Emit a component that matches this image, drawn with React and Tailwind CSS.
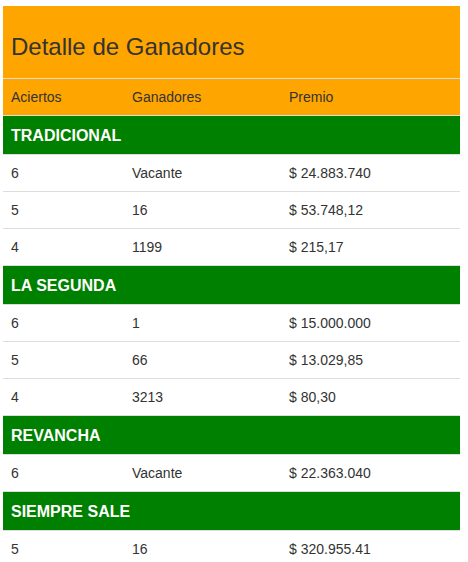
import React from 'react';

const sections = [
  {
    name: 'TRADICIONAL',
    rows: [
      ['6', 'Vacante', '$ 24.883.740'],
      ['5', '16', '$ 53.748,12'],
      ['4', '1199', '$ 215,17'],
    ],
  },
  {
    name: 'LA SEGUNDA',
    rows: [
      ['6', '1', '$ 15.000.000'],
      ['5', '66', '$ 13.029,85'],
      ['4', '3213', '$ 80,30'],
    ],
  },
  {
    name: 'REVANCHA',
    rows: [['6', 'Vacante', '$ 22.363.040']],
  },
  {
    name: 'SIEMPRE SALE',
    rows: [['5', '16', '$ 320.955.41']],
  },
];

const Row = ({ cells, className = '' }) => (
  <div className={`grid grid-cols-[121px_157px_179px] border-t border-[#ddd] ${className}`}>
    {cells.map((c, i) => (
      <div key={i} className="px-2 py-2 leading-5">{c}</div>
    ))}
  </div>
);

const App = () => {
  return (
    <div className="min-h-screen bg-white pt-[6px] pl-[3px] font-['Liberation_Sans',Arial,sans-serif] text-[#333]">
      <div className="w-[457px] text-[14px]">
        <div className="bg-[#ffa500]">
          <h3 className="px-2 pt-[28px] pb-[18px] text-[24px] leading-[26px]">Detalle de Ganadores</h3>
          <Row cells={['Aciertos', 'Ganadores', 'Premio']} />
        </div>
        {sections.map((s) => (
          <div key={s.name}>
            <div className="border-t border-[#ddd] bg-[#008000] px-2 pt-[10px] pb-[8px] text-[16px] font-bold leading-5 text-white">
              {s.name}
            </div>
            {s.rows.map((r, i) => (
              <Row key={i} cells={r} />
            ))}
          </div>
        ))}
      </div>
    </div>
  );
};

export default App;
